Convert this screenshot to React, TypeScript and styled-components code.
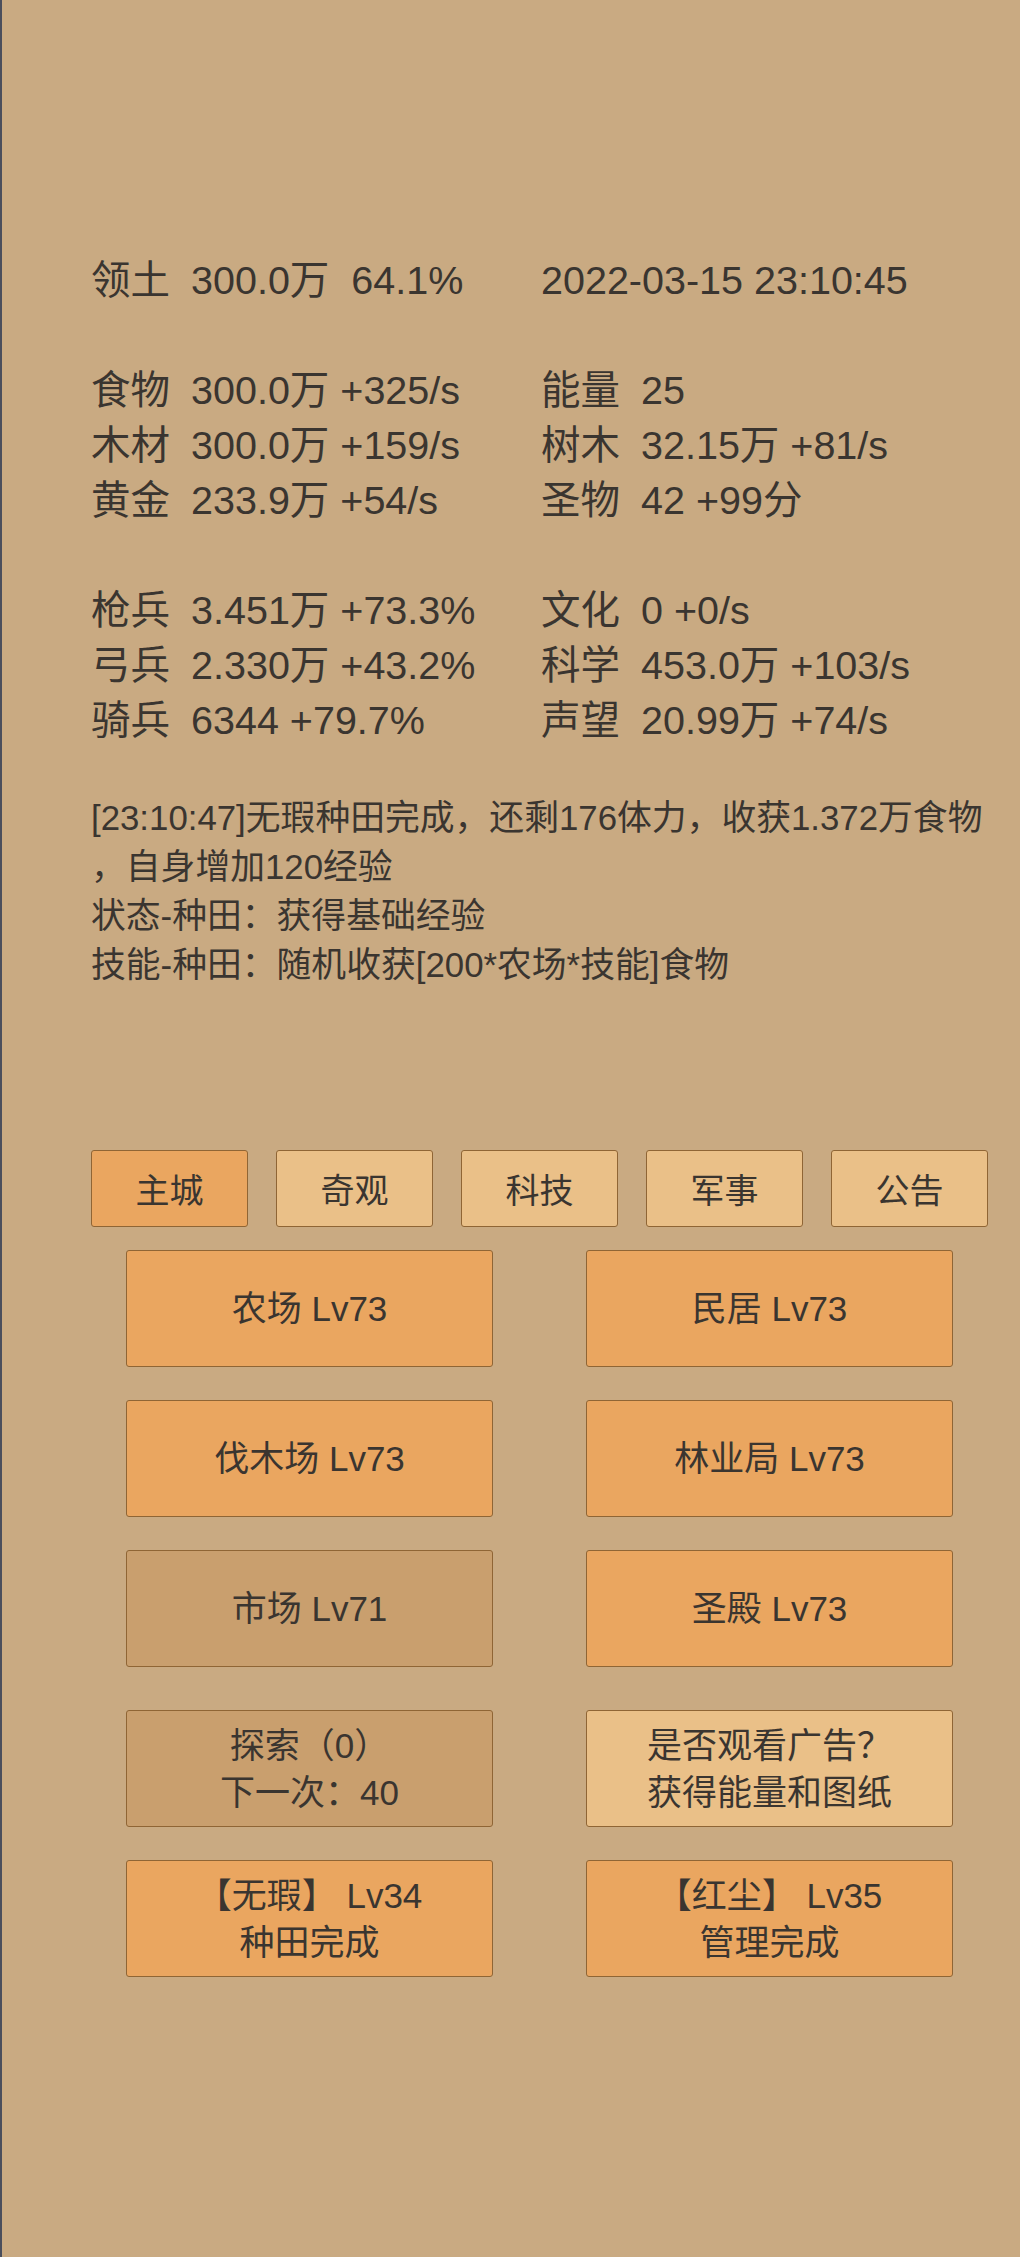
import React from "react";
import styled, { createGlobalStyle, css } from "styled-components";

const GlobalStyle = createGlobalStyle`
  html, body {
    margin: 0;
    padding: 0;
    background: #c9aa82;
  }
  body {
    font-family: "Liberation Sans", "Noto Sans CJK SC", sans-serif;
    color: #3a3530;
  }
`;

type Stat = { label: string; value: string };
type StatRow = [Stat | null, Stat | string];

const statGroups: StatRow[][] = [
  [[{ label: "领土", value: "300.0万  64.1%" }, "2022-03-15 23:10:45"]],
  [
    [
      { label: "食物", value: "300.0万 +325/s" },
      { label: "能量", value: "25" },
    ],
    [
      { label: "木材", value: "300.0万 +159/s" },
      { label: "树木", value: "32.15万 +81/s" },
    ],
    [
      { label: "黄金", value: "233.9万 +54/s" },
      { label: "圣物", value: "42 +99分" },
    ],
  ],
  [
    [
      { label: "枪兵", value: "3.451万 +73.3%" },
      { label: "文化", value: "0 +0/s" },
    ],
    [
      { label: "弓兵", value: "2.330万 +43.2%" },
      { label: "科学", value: "453.0万 +103/s" },
    ],
    [
      { label: "骑兵", value: "6344 +79.7%" },
      { label: "声望", value: "20.99万 +74/s" },
    ],
  ],
];

const logLines = [
  "[23:10:47]无瑕种田完成，还剩176体力，收获1.372万食物",
  "，自身增加120经验",
  "状态-种田：获得基础经验",
  "技能-种田：随机收获[200*农场*技能]食物",
];

const tabs = ["主城", "奇观", "科技", "军事", "公告"];

type Tone = "orange" | "light" | "muted";

const buildingGroups: { lines: string[]; tone: Tone }[][] = [
  [
    { lines: ["农场 Lv73"], tone: "orange" },
    { lines: ["民居 Lv73"], tone: "orange" },
    { lines: ["伐木场 Lv73"], tone: "orange" },
    { lines: ["林业局 Lv73"], tone: "orange" },
    { lines: ["市场 Lv71"], tone: "muted" },
    { lines: ["圣殿 Lv73"], tone: "orange" },
  ],
  [
    { lines: ["探索（0）", "下一次：40"], tone: "muted" },
    { lines: ["是否观看广告？", "获得能量和图纸"], tone: "light" },
    { lines: ["【无瑕】 Lv34", "种田完成"], tone: "orange" },
    { lines: ["【红尘】 Lv35", "管理完成"], tone: "orange" },
  ],
];

function renderCell(cell: Stat | string | null, key: string) {
  if (cell === null) return <Cell key={key} />;
  if (typeof cell === "string") return <Cell key={key}>{cell}</Cell>;
  return (
    <Cell key={key}>
      <Label>{cell.label}</Label>
      <Value>{cell.value}</Value>
    </Cell>
  );
}

export default function App() {
  return (
    <>
      <GlobalStyle />
      <Page>
        <Main>
          {statGroups.map((group, gi) => (
            <StatGroup key={gi}>
              {group.map((row, ri) => (
                <React.Fragment key={ri}>
                  {renderCell(row[0], `a${ri}`)}
                  {renderCell(row[1], `b${ri}`)}
                </React.Fragment>
              ))}
            </StatGroup>
          ))}

          <Log>
            {logLines.map((line, i) => (
              <LogLine key={i}>{line}</LogLine>
            ))}
          </Log>

          <TabBar>
            {tabs.map((t, i) => (
              <Tab key={t} active={i === 0}>
                {t}
              </Tab>
            ))}
          </TabBar>

          {buildingGroups.map((group, gi) => (
            <BuildingGrid key={gi} first={gi === 0}>
              {group.map((b, bi) => (
                <BuildingButton key={bi} tone={b.tone}>
                  {b.lines.map((l, li) => (
                    <span key={li}>{l}</span>
                  ))}
                </BuildingButton>
              ))}
            </BuildingGrid>
          ))}
        </Main>
      </Page>
    </>
  );
}

const Page = styled.div`
  min-height: 2257px;
  box-sizing: border-box;
  border-left: 2px solid #4a4e5c;
  background: #c9aa82;
  padding: 253px 0 0 89px;
`;

const Main = styled.main`
  width: 897px;
  display: flex;
  flex-direction: column;
`;

const StatGroup = styled.section`
  display: grid;
  grid-template-columns: 450px 450px;
  font-size: 39.5px;
  line-height: 55px;
  & + & {
    margin-top: 55px;
  }
`;

const Cell = styled.div`
  display: flex;
  white-space: pre;
`;

const Label = styled.span`
  width: 100px;
  flex-shrink: 0;
`;

const Value = styled.span``;

const Log = styled.section`
  margin-top: 45px;
  font-size: 34.8px;
  line-height: 49px;
`;

const LogLine = styled.div`
  white-space: nowrap;
`;

const TabBar = styled.nav`
  margin-top: 161px;
  display: flex;
  gap: 28px;
`;

const boxBase = css`
  box-sizing: border-box;
  border: 1px solid #8f6535;
  border-radius: 3px;
  display: flex;
  flex-direction: column;
  align-items: center;
  justify-content: center;
  color: #3a3530;
`;

const Tab = styled.div<{ active: boolean }>`
  ${boxBase}
  width: 157px;
  height: 77px;
  font-size: 34px;
  background: ${(p) => (p.active ? "#eaa660" : "#eac088")};
`;

const BuildingGrid = styled.div<{ first: boolean }>`
  margin-top: ${(p) => (p.first ? "23px" : "43px")};
  display: grid;
  grid-template-columns: 367px 367px;
  justify-content: center;
  column-gap: 93px;
  row-gap: 33px;
`;

const toneColors: Record<Tone, string> = {
  orange: "#eaa660",
  light: "#eac088",
  muted: "#c99f6e",
};

const BuildingButton = styled.div<{ tone: Tone }>`
  ${boxBase}
  height: 117px;
  font-size: 35px;
  line-height: 47px;
  background: ${(p) => toneColors[p.tone]};
  white-space: pre;
`;
